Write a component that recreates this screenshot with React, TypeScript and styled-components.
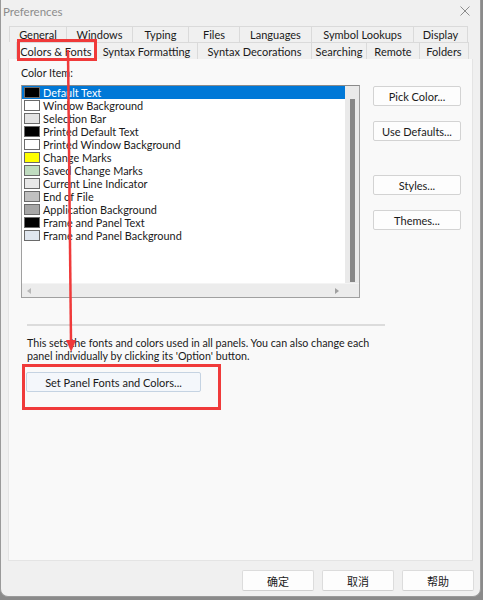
import styled, { createGlobalStyle } from "styled-components";

const FONT = `Lato, "Noto Sans", "Noto Sans CJK SC", sans-serif`;

const GlobalStyle = createGlobalStyle`
    html, body {
        margin: 0;
        padding: 0;
        background: #8a8a8a;
    }
    body {
        font-family: ${FONT};
        font-size: 10.7px;
        color: #1a1a1a;
    }
`;

const TABS_TOP = [
    { label: "General", width: 58 },
    { label: "Windows", width: 67 },
    { label: "Typing", width: 57 },
    { label: "Files", width: 52 },
    { label: "Languages", width: 73 },
    { label: "Symbol Lookups", width: 103 },
    { label: "Display", width: 55 },
];

const TABS_BOTTOM = [
    { label: "Colors & Fonts", width: 80, active: true },
    { label: "Syntax Formatting", width: 103 },
    { label: "Syntax Decorations", width: 115 },
    { label: "Searching", width: 56 },
    { label: "Remote", width: 54 },
    { label: "Folders", width: 50 },
];

const COLOR_ITEMS = [
    { name: "Default Text", color: "#000000" },
    { name: "Window Background", color: "#ffffff" },
    { name: "Selection Bar", color: "#e3e3e3" },
    { name: "Printed Default Text", color: "#000000" },
    { name: "Printed Window Background", color: "#ffffff" },
    { name: "Change Marks", color: "#ffff00" },
    { name: "Saved Change Marks", color: "#c0dcc0" },
    { name: "Current Line Indicator", color: "#e8e8e8" },
    { name: "End of File", color: "#c0c0c0" },
    { name: "Application Background", color: "#a6a6a6" },
    { name: "Frame and Panel Text", color: "#000000" },
    { name: "Frame and Panel Background", color: "#dfe6ef" },
];

const App = () => {
    return (
        <>
            <GlobalStyle />
            <Window>
                <TitleBar>
                    <Title>Preferences</Title>
                    <CloseIcon viewBox="0 0 10 10">
                        <path d="M0.5 0.5 L9.5 9.5 M9.5 0.5 L0.5 9.5" />
                    </CloseIcon>
                </TitleBar>

                <TabStrip>
                    <TabRow indent={9}>
                        {TABS_TOP.map((tab) => (
                            <Tab key={tab.label} style={{ width: tab.width }}>
                                {tab.label}
                            </Tab>
                        ))}
                    </TabRow>
                    <TabRow indent={16}>
                        {TABS_BOTTOM.map((tab) => (
                            <Tab
                                key={tab.label}
                                active={tab.active}
                                style={{ width: tab.width }}
                            >
                                {tab.label}
                            </Tab>
                        ))}
                    </TabRow>
                </TabStrip>

                <Panel>
                    <TopSection>
                        <ListColumn>
                            <Label>Color Item:</Label>
                            <ListBox>
                                <ListInner>
                                    <Rows>
                                        {COLOR_ITEMS.map((item, i) => (
                                            <Row key={item.name} selected={i === 0}>
                                                <Swatch color={item.color} />
                                                {item.name}
                                            </Row>
                                        ))}
                                    </Rows>
                                    <VScroll>
                                        <VThumb />
                                    </VScroll>
                                </ListInner>
                                <HScroll>
                                    <ArrowLeft />
                                    <ArrowRight />
                                </HScroll>
                            </ListBox>
                        </ListColumn>
                        <ButtonColumn>
                            <SideButton>Pick Color...</SideButton>
                            <SideButton>Use Defaults...</SideButton>
                            <SideButton offset={19}>Styles...</SideButton>
                            <SideButton>Themes...</SideButton>
                        </ButtonColumn>
                    </TopSection>

                    <LowerSection>
                        <Separator />
                        <Description>
                            This sets the fonts and colors used in all panels. You can also change each
                            <br />
                            panel individually by clicking its 'Option' button.
                        </Description>
                        <PanelButton>Set Panel Fonts and Colors...</PanelButton>
                    </LowerSection>
                </Panel>

                <Footer>
                    <FooterButton>确定</FooterButton>
                    <FooterButton>取消</FooterButton>
                    <FooterButton>帮助</FooterButton>
                </Footer>

                <Highlight style={{ left: 16, top: 39, width: 80, height: 22 }} />
                <Highlight style={{ left: 21, top: 364, width: 199, height: 46 }} />
                <Arrow viewBox="0 0 483 600">
                    <line x1="67" y1="50" x2="70" y2="342" />
                    <path d="M65 340 L75 340 L70.2 352 Z" />
                </Arrow>
            </Window>
        </>
    );
};

const Window = styled.div`
    position: relative;

    display: flex;
    flex-direction: column;

    width: 481px;
    height: 597px;

    background: #f0f0f0;
    border: 1px solid #9a9a9a;
    border-top: none;
    border-radius: 0 0 8px 8px;
    box-sizing: border-box;
    overflow: hidden;
`;

const TitleBar = styled.div`
    display: flex;
    align-items: center;
    justify-content: space-between;

    height: 22px;
    padding: 0 10px 0 2px;
`;

const Title = styled.span`
    color: #8c8c8c;
    font-size: 11.5px;
`;

const CloseIcon = styled.svg`
    width: 10px;
    height: 10px;

    & path {
        stroke: #8c8c8c;
        stroke-width: 1;
        fill: none;
    }
`;

const TabStrip = styled.div`
    display: flex;
    flex-direction: column;

    padding-top: 4px;
`;

const TabRow = styled.div<{ indent: number }>`
    display: flex;

    margin-left: ${(props) => props.indent - 1}px;
`;

const Tab = styled.div<{ active?: boolean }>`
    display: flex;
    align-items: center;
    justify-content: center;

    height: 16px;
    box-sizing: border-box;

    background: ${(props) => (props.active ? "#f9f9f9" : "#f0f0f0")};
    border: 1px solid #dadada;
    border-bottom: none;
    margin-right: -1px;

    color: #1a1a1a;
    font-size: 11px;
    white-space: nowrap;

    ${TabRow}:last-child & {
        height: 17px;
    }
`;

const Panel = styled.div`
    display: flex;
    flex-direction: column;

    height: 502px;
    margin: 0 7px 0 7px;

    background: #f9f9f9;
    border: 1px solid #e4e4e4;
    border-top: none;
    box-sizing: border-box;
`;

const TopSection = styled.div`
    display: flex;
    gap: 13px;

    padding: 7px 0 0 12px;
`;

const ListColumn = styled.div`
    display: flex;
    flex-direction: column;
`;

const Label = styled.div`
    height: 14px;
    margin-bottom: 5px;
    line-height: 14px;
`;

const ListBox = styled.div`
    display: flex;
    flex-direction: column;

    width: 339px;
    height: 213px;

    background: #ffffff;
    border: 1px solid #a0a0a0;
    border-top-color: #8a8a8a;
    box-sizing: border-box;
`;

const ListInner = styled.div`
    display: flex;
    flex: 1;
`;

const Rows = styled.div`
    flex: 1;
`;

const Row = styled.div<{ selected?: boolean }>`
    display: flex;
    align-items: center;
    gap: 3px;

    height: 13px;
    padding-left: 2px;

    background: ${(props) => (props.selected ? "#0078d7" : "transparent")};
    color: ${(props) => (props.selected ? "#ffffff" : "#1a1a1a")};
    font-size: 10.9px;
    line-height: 13px;
    white-space: nowrap;
`;

const Swatch = styled.span<{ color: string }>`
    width: 14px;
    height: 9px;

    background: ${(props) => props.color};
    border: 1px solid #6a6a6a;
`;

const VScroll = styled.div`
    display: flex;
    justify-content: center;

    width: 14px;
    padding-top: 13px;

    background: #eaeaea;
`;

const VThumb = styled.div`
    width: 5px;
    height: 183px;

    background: #878787;
`;

const HScroll = styled.div`
    display: flex;
    align-items: center;
    justify-content: space-between;

    height: 13px;
    padding: 0 20px 0 5px;

    background: #ececec;
    border-top: 1px solid #f4f4f4;
`;

const ArrowLeft = styled.span`
    width: 0;
    height: 0;

    border-top: 3px solid transparent;
    border-bottom: 3px solid transparent;
    border-right: 4px solid #b8b8b8;
`;

const ArrowRight = styled.span`
    width: 0;
    height: 0;

    border-top: 3px solid transparent;
    border-bottom: 3px solid transparent;
    border-left: 4px solid #a0a0a0;
`;

const ButtonColumn = styled.div`
    display: flex;
    flex-direction: column;
    gap: 15px;

    padding-top: 20px;
`;

const Button = styled.button`
    display: flex;
    align-items: center;
    justify-content: center;

    padding: 0;

    background: #fdfdfd;
    border: 1px solid #d3d3d3;
    border-radius: 2px;
    box-sizing: border-box;

    font-family: ${FONT};
    font-size: 11px;
    color: #1a1a1a;
`;

const SideButton = styled(Button)<{ offset?: number }>`
    width: 88px;
    height: 20px;
    margin-top: ${(props) => props.offset ?? 0}px;
`;

const LowerSection = styled.div`
    display: flex;
    flex-direction: column;

    padding: 26px 0 0 18px;
`;

const Separator = styled.div`
    width: 358px;
    height: 2px;

    background: #dcdcdc;
`;

const Description = styled.div`
    margin-top: 10px;

    line-height: 13px;
    color: #1a1a1a;
`;

const PanelButton = styled(Button)`
    width: 175px;
    height: 20px;
    margin: 10px 0 0 -1px;

    background: #f4f7fb;
    border-color: #c5d3e2;
`;

const Footer = styled.div`
    display: flex;
    justify-content: flex-end;
    gap: 8px;

    padding: 9px 6px 0 0;
`;

const FooterButton = styled(Button)`
    width: 72px;
    height: 21px;

    background: #fdfdfd;
    border-color: #dcdcdc;
    border-bottom-color: #cfcfcf;
`;

const Highlight = styled.div`
    position: absolute;

    border: 3px solid #f03a3a;
    box-sizing: border-box;
    pointer-events: none;
`;

const Arrow = styled.svg`
    position: absolute;
    top: 0;
    left: 0;

    width: 483px;
    height: 600px;
    pointer-events: none;

    & line {
        stroke: #f03a3a;
        stroke-width: 2.5;
    }

    & path {
        fill: #f03a3a;
    }
`;

export default App;
